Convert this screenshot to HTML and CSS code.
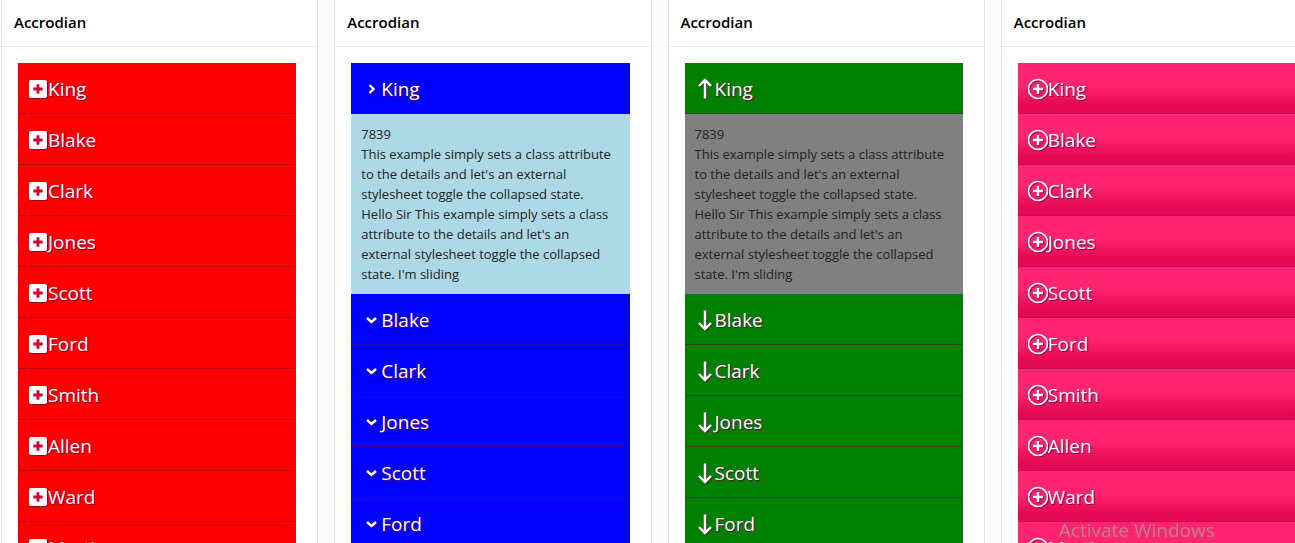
FILE: index.html
```html
<!DOCTYPE html>
<html lang="en">
<head>
<meta charset="utf-8">
<title>Accrodian</title>
<link rel="stylesheet" href="styles.css">
</head>
<body>
<svg class="symbols" aria-hidden="true">
  <symbol id="plus-square" viewBox="0 0 20 24"><rect x="1" y="3" width="18" height="18" rx="2"/><path class="plus-mark" d="M10 7.3v9.4M5.3 12h9.4"/></symbol>
  <symbol id="chevron-right" viewBox="0 0 20 24"><path class="stroke" d="M8.5 8l4 4-4 4"/></symbol>
  <symbol id="chevron-down" viewBox="0 0 20 24"><path class="stroke" d="M6 10l4.5 4 4.5-4"/></symbol>
  <symbol id="arrow-up" viewBox="0 0 20 24"><path class="stroke" d="M10 21.500V4M4 9l6-6 6 6"/></symbol>
  <symbol id="arrow-down" viewBox="0 0 20 24"><path class="stroke" d="M10 2.500V20M4 15l6 6 6-6"/></symbol>
  <symbol id="plus-circle" viewBox="0 0 20 24"><circle class="ring" cx="10" cy="12" r="9.5"/><path class="stroke" d="M10 7v10M5 12h10"/></symbol>
</svg>
<main class="board">
  <section class="card">
    <h2 class="card-title">Accrodian</h2>
    <div class="card-body"><div class="accordion red">
      <details><summary><svg class="icon"><use href="#plus-square"/></svg>King</summary></details>
      <details><summary><svg class="icon"><use href="#plus-square"/></svg>Blake</summary></details>
      <details><summary><svg class="icon"><use href="#plus-square"/></svg>Clark</summary></details>
      <details><summary><svg class="icon"><use href="#plus-square"/></svg>Jones</summary></details>
      <details><summary><svg class="icon"><use href="#plus-square"/></svg>Scott</summary></details>
      <details><summary><svg class="icon"><use href="#plus-square"/></svg>Ford</summary></details>
      <details><summary><svg class="icon"><use href="#plus-square"/></svg>Smith</summary></details>
      <details><summary><svg class="icon"><use href="#plus-square"/></svg>Allen</summary></details>
      <details><summary><svg class="icon"><use href="#plus-square"/></svg>Ward</summary></details>
      <details><summary><svg class="icon"><use href="#plus-square"/></svg>Martin</summary></details>
    </div></div>
  </section>
  <section class="card">
    <h2 class="card-title">Accrodian</h2>
    <div class="card-body"><div class="accordion blue">
      <details open><summary><svg class="icon"><use href="#chevron-right"/></svg>King</summary>
        <p class="panel">7839<br>This example simply sets a class attribute to the details and let's an external stylesheet toggle the collapsed state. Hello Sir This example simply sets a class attribute to the details and let's an external stylesheet toggle the collapsed state. I'm sliding</p>
      </details>
      <details><summary><svg class="icon"><use href="#chevron-down"/></svg>Blake</summary></details>
      <details><summary><svg class="icon"><use href="#chevron-down"/></svg>Clark</summary></details>
      <details><summary><svg class="icon"><use href="#chevron-down"/></svg>Jones</summary></details>
      <details><summary><svg class="icon"><use href="#chevron-down"/></svg>Scott</summary></details>
      <details><summary><svg class="icon"><use href="#chevron-down"/></svg>Ford</summary></details>
    </div></div>
  </section>
  <section class="card">
    <h2 class="card-title">Accrodian</h2>
    <div class="card-body"><div class="accordion green">
      <details open><summary><svg class="icon"><use href="#arrow-up"/></svg>King</summary>
        <p class="panel">7839<br>This example simply sets a class attribute to the details and let's an external stylesheet toggle the collapsed state. Hello Sir This example simply sets a class attribute to the details and let's an external stylesheet toggle the collapsed state. I'm sliding</p>
      </details>
      <details><summary><svg class="icon"><use href="#arrow-down"/></svg>Blake</summary></details>
      <details><summary><svg class="icon"><use href="#arrow-down"/></svg>Clark</summary></details>
      <details><summary><svg class="icon"><use href="#arrow-down"/></svg>Jones</summary></details>
      <details><summary><svg class="icon"><use href="#arrow-down"/></svg>Scott</summary></details>
      <details><summary><svg class="icon"><use href="#arrow-down"/></svg>Ford</summary></details>
    </div></div>
  </section>
  <section class="card">
    <h2 class="card-title">Accrodian</h2>
    <div class="card-body"><div class="accordion pink">
      <details><summary><svg class="icon"><use href="#plus-circle"/></svg>King</summary></details>
      <details><summary><svg class="icon"><use href="#plus-circle"/></svg>Blake</summary></details>
      <details><summary><svg class="icon"><use href="#plus-circle"/></svg>Clark</summary></details>
      <details><summary><svg class="icon"><use href="#plus-circle"/></svg>Jones</summary></details>
      <details><summary><svg class="icon"><use href="#plus-circle"/></svg>Scott</summary></details>
      <details><summary><svg class="icon"><use href="#plus-circle"/></svg>Ford</summary></details>
      <details><summary><svg class="icon"><use href="#plus-circle"/></svg>Smith</summary></details>
      <details><summary><svg class="icon"><use href="#plus-circle"/></svg>Allen</summary></details>
      <details><summary><svg class="icon"><use href="#plus-circle"/></svg>Ward</summary></details>
      <details><summary><svg class="icon"><use href="#plus-circle"/></svg>Martin</summary></details>
    </div></div>
  </section>
</main>
<div class="watermark">Activate Windows</div>
</body>
</html>
```
FILE: styles.css
```css
* { box-sizing: border-box; }

body {
  margin: 0;
  height: 100vh;
  overflow: hidden;
  background: #fcfcfc;
  color: #222;
  font-family: "Open Sans", "Noto Sans", sans-serif;
}

.symbols { display: none; }

/* The row of cards runs a little past the right edge of the window. */
.board {
  display: grid;
  grid-template-columns: repeat(4, minmax(0, 1fr));
  gap: 16px;
  min-height: 100vh;
  margin: 0 -23px 0 1px;
}

.card {
  background: #fff;
  border: solid #e4e4e4;
  border-width: 0 1px;
}

.card-title {
  margin: 0;
  padding: 10px 12px 12px;
  border-bottom: 1px solid #e8e8e8;
  color: #000;
  font-size: 15px;
  font-weight: 600;
  line-height: 24px;
}

.card-body { padding: 16px 21px 16px 16px; }

summary {
  display: flex;
  align-items: center;
  height: 51px;
  padding: 1px 10px 0;
  border-bottom: 1px solid rgba(112, 0, 72, 0.5);
  color: #fff;
  font-size: 19px;
  text-shadow: 1px 1px 1px #704;
  cursor: pointer;
}

.icon {
  flex: none;
  width: 20px;
  height: 24px;
  overflow: visible;
  fill: #fff;
  filter: drop-shadow(1px 1px 0 rgba(112, 0, 72, 0.7));
}

.stroke {
  fill: none;
  stroke: #fff;
  stroke-width: 2.4;
}

.ring {
  fill: none;
  stroke: #fff;
  stroke-width: 1.7;
}

.plus-mark {
  stroke: #d8002c;
  stroke-width: 2.8;
}

.panel {
  margin: 0;
  padding: 10px 14px 10px 10px;
  font-size: 13px;
  line-height: 20px;
}

.red summary { background-color: #f00; }
.blue summary { background-color: #00f; }
.green summary { background-color: #008000; }
.pink summary { background-image: linear-gradient(#ff246f 0%, #ff246f 45%, #e50852 85%, #e50852 100%); }
.blue .panel { background: #add8e6; }
.green .panel { background: #808080; }

.watermark {
  position: absolute;
  right: 80px;
  bottom: 0;
  color: rgba(160, 160, 160, 0.75);
  font-size: 19px;
  line-height: 26px;
}
```
